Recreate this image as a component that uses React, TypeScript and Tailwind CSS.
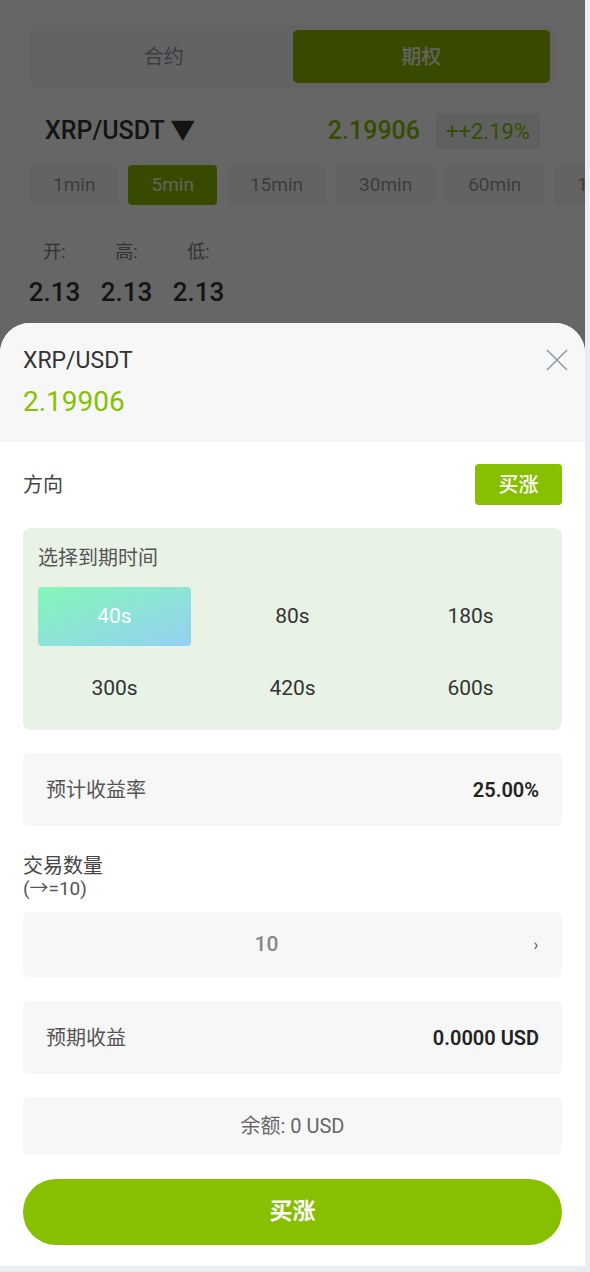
import { useState } from "react";

const periods = ["1min", "5min", "15min", "30min", "60min", "120min"];
const expiries = ["40s", "80s", "180s", "300s", "420s", "600s"];
const ohl = [
	{ label: "开:", value: "2.13" },
	{ label: "高:", value: "2.13" },
	{ label: "低:", value: "2.13" },
];

function CloseIcon() {
	return (
		<svg width="22" height="22" viewBox="0 0 22 22" fill="none">
			<path d="M1 1L21 21M21 1L1 21" stroke="#8f9ca6" strokeWidth="1.6" />
		</svg>
	);
}

function BackPage() {
	return (
		<div className="px-[30px] pt-[25px]">
			<div className="flex h-[63px] rounded-[8px] bg-[#f7f7f7] p-[5px]">
				<div className="flex flex-1 items-center justify-center text-[20px] text-[#999]">合约</div>
				<div className="flex flex-1 items-center justify-center rounded-[5px] bg-[#8cba00] text-[20px] font-medium text-white/90">
					期权
				</div>
			</div>

			<div className="mt-[25px] flex h-[36px] items-center px-[15px]">
				<div className="text-[25px] font-medium text-[#333]">XRP/USDT ▼</div>
				<div className="ml-auto text-[25px] font-medium text-[#86c000]">2.19906</div>
				<div className="ml-[16px] flex h-[36px] items-center rounded-[4px] bg-[#eef3f2] px-[10px] text-[22px] text-[#86c000]">
					++2.19%
				</div>
			</div>

			<div className="mt-[16px] -mr-[30px] flex gap-[10px] overflow-hidden">
				{periods.map((p) => (
					<div
						key={p}
						className={
							p === "5min"
								? "flex h-[40px] shrink-0 items-center rounded-[4px] bg-[#8cba00] px-[23px] text-[19px] text-white/90"
								: "flex h-[40px] shrink-0 items-center rounded-[4px] bg-[#f7f7f7] px-[23px] text-[19px] text-[#999]"
						}
					>
						{p}
					</div>
				))}
			</div>

			<div className="mt-[35px] flex gap-[23px]">
				{ohl.map((o, i) => (
					<div key={i} className="flex w-[49px] flex-col items-center">
						<div className="h-[24px] text-[18px] leading-[24px] text-[#808080]">{o.label}</div>
						<div className="mt-[12px] text-[26px] font-medium leading-[32px] text-[#333]">{o.value}</div>
					</div>
				))}
			</div>
		</div>
	);
}

function InfoRow({ label, value }: { label: string; value: string }) {
	return (
		<div className="flex h-[73px] items-center rounded-[6px] bg-[#f7f7f7] px-[23px]">
			<span className="text-[20px] text-[#555]">{label}</span>
			<span className="ml-auto text-[20px] font-semibold text-[#222]">{value}</span>
		</div>
	);
}

function Sheet() {
	const [picked, setPicked] = useState("40s");
	return (
		<div className="absolute bottom-0 left-0 right-0 overflow-hidden rounded-t-[30px] bg-white">
			<div className="relative bg-[#f7f7f7] px-[23px] pb-[22px] pt-[23px]">
				<div className="text-[23px] leading-[30px] text-[#333]">XRP/USDT</div>
				<div className="mt-[8px] text-[28px] leading-[36px] text-[#86c000]">2.19906</div>
				<button className="absolute right-[17px] top-[26px]">
					<CloseIcon />
				</button>
			</div>

			<div className="px-[23px] pb-[21px]">
				<div className="mt-[22px] flex items-center">
					<span className="text-[20px] text-[#444]">方向</span>
					<button className="ml-auto flex h-[41px] w-[87px] items-center justify-center rounded-[4px] bg-[#86c000] text-[20px] font-medium text-white">
						买涨
					</button>
				</div>

				<div className="mt-[23px] rounded-[8px] bg-[#e8f3e6] px-[15px] pb-[12px] pt-[18px]">
					<div className="text-[20px] leading-[24px] text-[#555]">选择到期时间</div>
					<div className="mt-[17px] grid grid-cols-3 gap-x-[25px] gap-y-[13px]">
						{expiries.map((e) => (
							<button
								key={e}
								onClick={() => setPicked(e)}
								className={
									picked === e
										? "flex h-[59px] items-center justify-center rounded-[4px] bg-gradient-to-br from-[#84f6b6] to-[#94d0f2] text-[21px] text-white"
										: "flex h-[59px] items-center justify-center rounded-[4px] text-[21px] text-[#333]"
								}
							>
								{e}
							</button>
						))}
					</div>
				</div>

				<div className="mt-[23px]">
					<InfoRow label="预计收益率" value="25.00%" />
				</div>

				<div className="mt-[28px] text-[20px] leading-[24px] text-[#444]">交易数量</div>
				<div className="text-[19px] leading-[22px] text-[#555]">(→=10)</div>
				<div className="mt-[12px] flex h-[65px] items-center rounded-[6px] bg-[#f7f7f7]">
					<div className="flex-1 text-center text-[21px] font-medium text-[#888]">10</div>
					<div className="w-[52px] text-center text-[16px] text-[#555]">›</div>
				</div>

				<div className="mt-[24px]">
					<InfoRow label="预期收益" value="0.0000 USD" />
				</div>

				<div className="mt-[23px] flex h-[58px] items-center justify-center rounded-[6px] bg-[#f7f7f7] text-[20px] text-[#666]">
					余额: 0 USD
				</div>

				<button className="mt-[24px] flex h-[66px] w-full items-center justify-center rounded-full bg-[#86c000] text-[23px] font-bold text-white">
					买涨
				</button>
			</div>
		</div>
	);
}

export default function App() {
	return (
		<div className="min-h-screen bg-[#e9edf2] font-['Roboto','Noto_Sans_CJK_SC',sans-serif]">
			<div className="relative h-[1266px] w-[585px] overflow-hidden bg-white">
				<BackPage />
				<div className="absolute inset-0 bg-black/60" />
				<Sheet />
			</div>
		</div>
	);
}
